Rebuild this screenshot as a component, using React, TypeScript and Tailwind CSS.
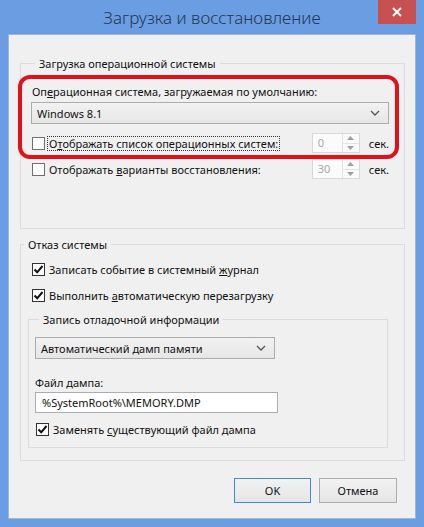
import React from "react";

const font = { fontFamily: "'Noto Sans', 'Open Sans', sans-serif" };

function Check({ checked }: { checked?: boolean }) {
  return (
    <span
      className={
        "flex h-[13px] w-[13px] shrink-0 items-center justify-center border bg-white " +
        (checked ? "border-[#333333]" : "border-[#707070]")
      }
    >
      {checked && (
        <svg width="11" height="11" viewBox="0 0 11 11">
          <path d="M1.5 5.5 L4.2 8.3 L9.5 2" fill="none" stroke="#111" strokeWidth="2" />
        </svg>
      )}
    </span>
  );
}

function Chevron() {
  return (
    <svg width="10" height="6" viewBox="0 0 10 6" className="shrink-0">
      <path d="M1 1 L5 5 L9 1" fill="none" stroke="#555" strokeWidth="1.3" />
    </svg>
  );
}

function Combo({ text, className }: { text: string; className: string }) {
  return (
    <div
      className={
        "flex h-[22px] items-center justify-between border border-[#acacac] bg-gradient-to-b from-[#f2f2f2] to-[#e6e6e6] pl-[5px] pr-[8px] text-[#111]" +
        " " +
        className
      }
    >
      <span>{text}</span>
      <Chevron />
    </div>
  );
}

function Spinner({ value }: { value: string }) {
  return (
    <div className="flex h-[20px] w-[48px] border border-[#d9d9d9] bg-[#fbfbfb]">
      <span className="flex-1 pl-[5px] leading-[18px] text-[#a8a8a8]">{value}</span>
      <div className="flex w-[17px] flex-col border-l border-[#e2e2e2]">
        <div className="flex flex-1 items-center justify-center border-b border-[#e2e2e2]">
          <svg width="7" height="4" viewBox="0 0 7 4">
            <path d="M0 4 L3.5 0 L7 4 Z" fill="#a0a0a0" />
          </svg>
        </div>
        <div className="flex flex-1 items-center justify-center">
          <svg width="7" height="4" viewBox="0 0 7 4">
            <path d="M0 0 L3.5 4 L7 0 Z" fill="#a0a0a0" />
          </svg>
        </div>
      </div>
    </div>
  );
}

export default function App() {
  return (
    <div
      className="flex h-[527px] w-[424px] flex-col whitespace-nowrap bg-[#6b9de3] text-[11px] leading-[15px] text-[#111]"
      style={font}
    >
      {/* Title bar */}
      <div className="relative flex h-[34px] shrink-0 items-center justify-center">
        <span className="text-[17px] font-light text-[#27364f]">Загрузка и восстановление</span>
        <div className="absolute right-[8px] top-0 flex h-[24px] w-[38px] items-center justify-center bg-[#c75050]">
          <svg width="10" height="10" viewBox="0 0 10 10">
            <path d="M1 1 L9 9 M9 1 L1 9" stroke="#fff" strokeWidth="2" />
          </svg>
        </div>
      </div>

      {/* Client area */}
      <div className="relative mx-[8px] flex flex-1 flex-col border border-[#9fb7dc] bg-[#f0f0f0]">
        <div className="mb-[8px] flex flex-1 flex-col">
          {/* Group 1 */}
          <fieldset className="ml-[11px] mr-[10px] mt-[21px] border border-[#dcdcdc] pb-[49px] pl-[11px] pr-[15px] pt-[13px]">
            <legend className="ml-[3px] px-[4px]">Загрузка операционной системы</legend>
            <div>
              Оп<u>е</u>рационная система, загружаемая по умолчанию:
            </div>
            <Combo text="Windows 8.1" className="mt-[3px] -ml-[1px]" />
            <div className="mt-[9px] flex h-[20px] items-center">
              <Check />
              <span className="ml-[2px] border border-dotted border-[#333] px-[1px] leading-[13px]">
                О<u>т</u>ображать список операционных систем:
              </span>
              <div className="ml-auto flex items-center gap-[9px]">
                <Spinner value="0" />
                <span>сек.</span>
              </div>
            </div>
            <div className="mt-[6px] flex h-[20px] items-center">
              <Check />
              <span className="ml-[4px]">
                Отображать <u>в</u>арианты восстановления:
              </span>
              <div className="ml-auto flex items-center gap-[9px]">
                <Spinner value="30" />
                <span>сек.</span>
              </div>
            </div>
          </fieldset>

          {/* Group 2 */}
          <fieldset className="ml-[11px] mr-[10px] mt-[8px] border border-[#dcdcdc] pb-[12px] pt-[9px]">
            <legend className="ml-[3px] px-[4px]">Отказ системы</legend>
            <div className="ml-[11px] flex h-[16px] items-center gap-[4px]">
              <Check checked />
              <span>
                Записать событие в системный <u>ж</u>урнал
              </span>
            </div>
            <div className="ml-[11px] mt-[10px] flex h-[16px] items-center gap-[4px]">
              <Check checked />
              <span>
                Выполнить <u>а</u>втоматическую перезагрузку
              </span>
            </div>
            <fieldset className="ml-[7px] mr-[16px] mt-[9px] border border-[#dcdcdc] pb-[10px] pl-[6px] pt-[10px]">
              <legend className="ml-[4px] px-[4px]">Запись отладочной информации</legend>
              <Combo text="Автоматический дамп памяти" className="w-[240px]" />
              <div className="mt-[16px]">Файл дампа:</div>
              <div className="mt-[2px] flex h-[21px] w-[243px] items-center border border-[#abadb3] bg-white pl-[6px] text-[#111]">
                %SystemRoot%\MEMORY.DMP
              </div>
              <div className="ml-[1px] mt-[8px] flex h-[16px] items-center gap-[4px]">
                <Check checked />
                <span>
                  Заменять <u>с</u>уществующий файл дампа
                </span>
              </div>
            </fieldset>
          </fieldset>

          {/* Buttons */}
          <div className="mr-[18px] mt-[17px] flex justify-end gap-[8px]">
            <button className="h-[25px] w-[77px] border border-[#3c8bd6] bg-gradient-to-b from-[#f2f2f2] to-[#e5e5e5] text-[#111]">
              OK
            </button>
            <button className="h-[25px] w-[78px] border border-[#acacac] bg-gradient-to-b from-[#f2f2f2] to-[#e5e5e5] text-[#111]">
              Отмена
            </button>
          </div>
        </div>

        {/* Red annotation */}
        <div className="pointer-events-none absolute left-[9px] top-[40px] h-[84px] w-[381px] rounded-[12px] border-[4px] border-[#e3101b]" />
      </div>
      <div className="h-[8px] shrink-0" />
    </div>
  );
}
